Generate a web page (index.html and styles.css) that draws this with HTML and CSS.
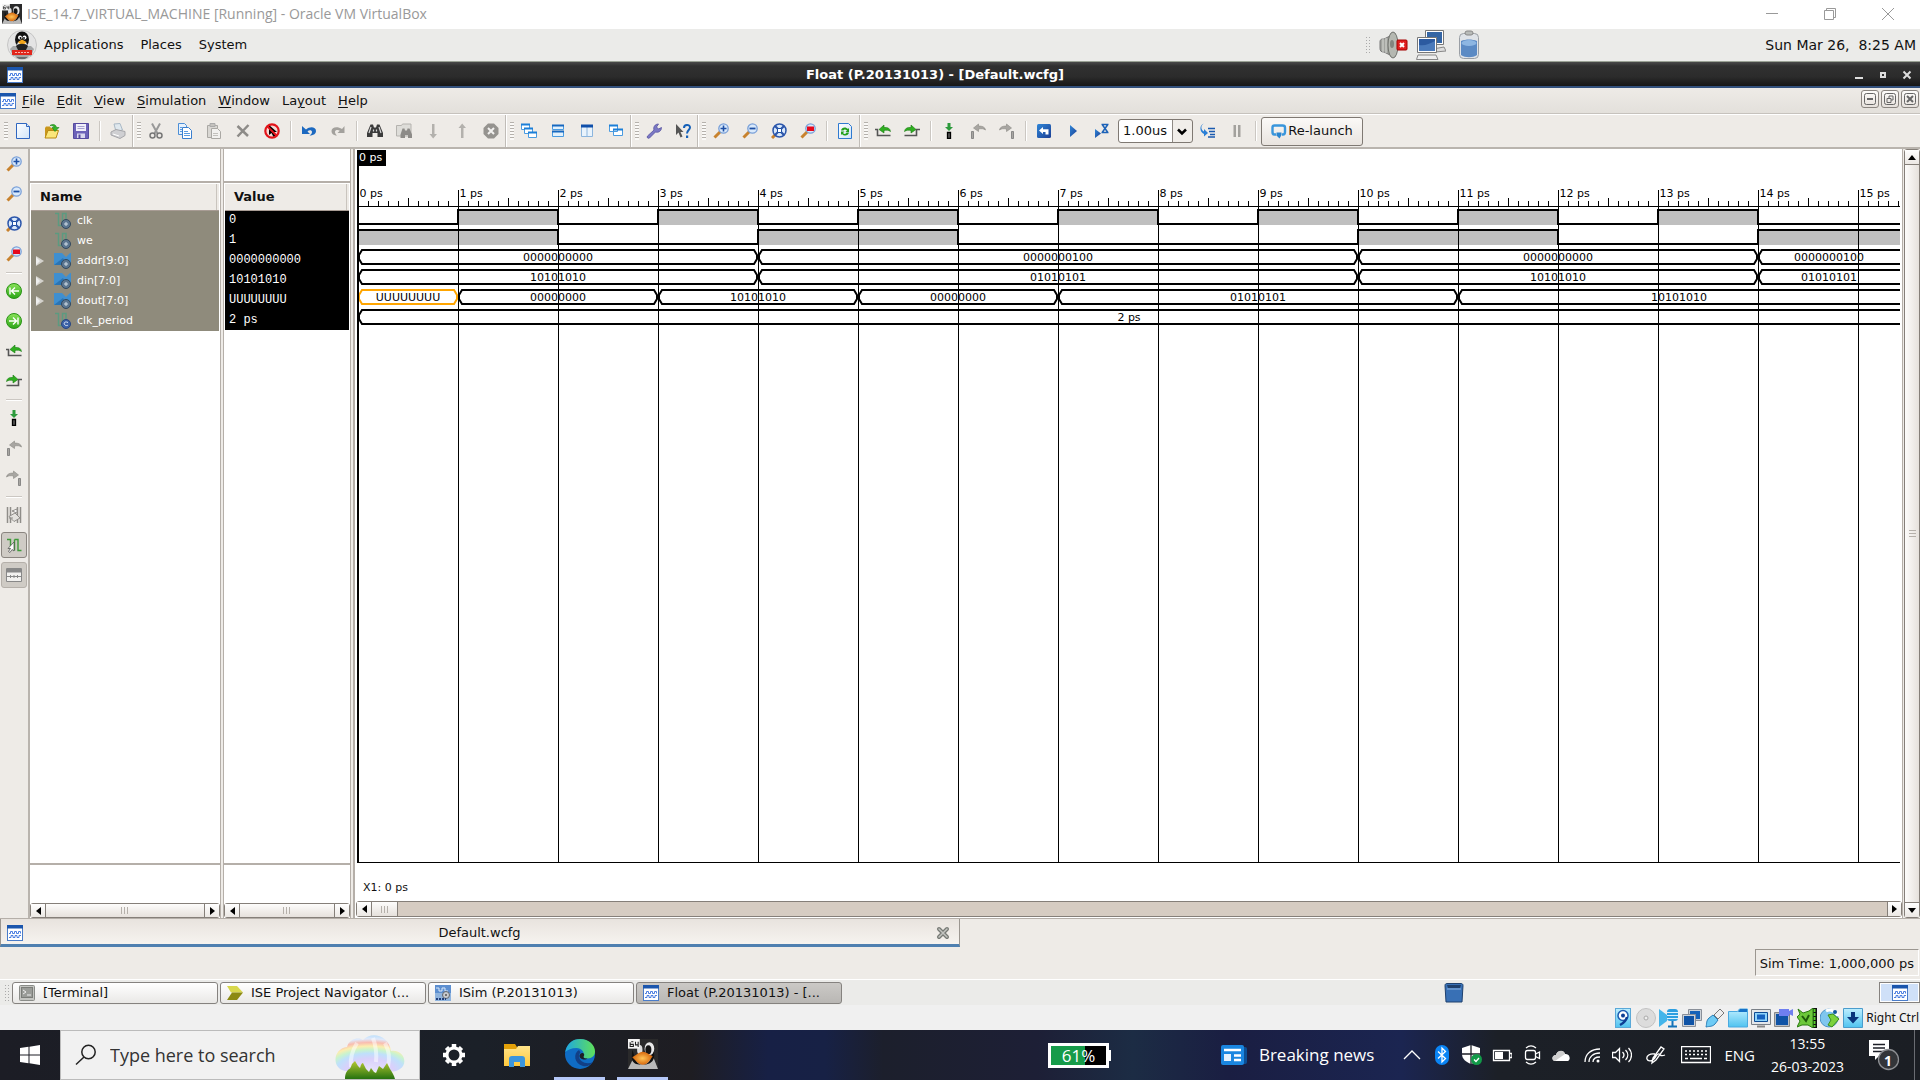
FILE: index.html
```html
<!DOCTYPE html>
<html lang="en">
<head>
<meta charset="utf-8">
<title>ISE_14.7_VIRTUAL_MACHINE [Running] - Oracle VM VirtualBox</title>
<link rel="stylesheet" href="styles.css">
</head>
<body>
<svg class="sprite" aria-hidden="true">
  <defs>
    <linearGradient id="gBlue" x1="0" y1="0" x2="1" y2="1"><stop offset="0" stop-color="#2f86d8"/><stop offset="1" stop-color="#1c3f94"/></linearGradient>
    <linearGradient id="gCyan" x1="0" y1="0" x2="0" y2="1"><stop offset="0" stop-color="#bdeeff"/><stop offset="1" stop-color="#4fc3f0"/></linearGradient>
    <linearGradient id="gPage" x1="0" y1="0" x2="1" y2="1"><stop offset="0" stop-color="#fff"/><stop offset="1" stop-color="#cfe4fa"/></linearGradient>
    <linearGradient id="gGreen" x1="0" y1="0" x2="0" y2="1"><stop offset="0" stop-color="#8be35a"/><stop offset="1" stop-color="#2aa516"/></linearGradient>
    <linearGradient id="gFolder" x1="0" y1="0" x2="0" y2="1"><stop offset="0" stop-color="#ffe48a"/><stop offset="1" stop-color="#ffc93c"/></linearGradient>
    <linearGradient id="gEdge" x1="0" y1="0" x2="1" y2="0"><stop offset="0" stop-color="#1fa7e0"/><stop offset="1" stop-color="#5fe05a"/></linearGradient>
    <radialGradient id="gRainbow" cx=".5" cy="1" r="1"><stop offset="0" stop-color="#e8e4fb"/><stop offset=".35" stop-color="#d9d0fb"/><stop offset=".5" stop-color="#bfe0fb"/><stop offset=".6" stop-color="#c8f3cf"/><stop offset=".7" stop-color="#fbeeb0"/><stop offset=".8" stop-color="#f9bdb0"/><stop offset=".9" stop-color="#dfe9fb"/><stop offset="1" stop-color="#bfe0fb"/></radialGradient>
    <linearGradient id="gGrass" x1="0" y1="0" x2="0" y2="1"><stop offset="0" stop-color="#b6c832"/><stop offset="1" stop-color="#25720f"/></linearGradient>
    <radialGradient id="gBeak"><stop offset="0" stop-color="#ffc457"/><stop offset="1" stop-color="#d5660c"/></radialGradient>
  </defs>
  <symbol id="wave" viewBox="0 0 16 16"><rect x=".5" y=".5" width="15" height="15" fill="#fff" stroke="#4a7cc8"/><rect width="16" height="3.500" fill="#1b56ad"/><path d="M2 8.500h1.500v-2h2v2h2v-2h2v2h2v-2h2v2M2 12.500h2v-2h2v2h2v-2h2v2h2v-2h2" fill="none" stroke="#4b7fe0"/></symbol>
  <symbol id="penguin" viewBox="0 0 28 28"><rect width="28" height="28" fill="#2a2a2b"/><path d="M0 28l4-8 20-2 4 10z" fill="#b9b9b9"/><path d="M4 10c3 8 3 14 10 14s9-10 9-14c3 5 2 14-9 14S3 20 4 10z" fill="#111"/><ellipse cx="11" cy="10" rx="2.500" ry="4.500" fill="#ddd"/><ellipse cx="20" cy="9" rx="4.500" ry="6" fill="#e8e8e8"/><ellipse cx="19" cy="10" rx="2.800" ry="4.200" fill="#151515"/><path d="M4 17c3-1 6-5 10-5 3 0 6 3 9 4-2 3-5 8-9 8s-7-4-10-7z" fill="url(#gBeak)"/><rect width="11" height="9" fill="#f4f4f4"/><path d="M2 3v4h3V5H2M5 2.500H3M7 2.500v3h3M9.500 2.500v5" fill="none" stroke="#222"/></symbol>
  <symbol id="new" viewBox="0 0 16 16"><path d="M1.500.5h10l3 3v12h-13z" fill="url(#gPage)" stroke="#2f66c0"/><path d="M11.500.5v3h3" fill="#dbe9fb" stroke="#2f66c0"/></symbol>
  <symbol id="open" viewBox="0 0 16 16"><path d="M1 5l1-1.500h4L7 5h5v10H1z" fill="#c9971c"/><path d="M1 15l3-7.500h10.500L12 15z" fill="#fbe67a" stroke="#b98a12"/><path d="M6 2.500c3-2 6-1 6.500 2H15l-4 4-3-4h2.200C10 3 8 2.500 6 2.500z" fill="#35b52a" stroke="#187d14" stroke-width=".6"/></symbol>
  <symbol id="save" viewBox="0 0 16 16"><path d="M.5.5h15v15h-15z" fill="#6c62b8" stroke="#554a9e"/><path d="M3 1h10v7H3z" fill="#f1f0fa"/><path d="M4.500 3.500h7M4.500 5.500h7" stroke="#a7a2d2"/><path d="M4 10.500h8V15H4z" fill="#d9d7ee"/><path d="M5.500 11.500h2V15h-2z" fill="#554a9e"/></symbol>
  <symbol id="print" viewBox="0 0 16 16"><path d="M4 1l6-.5L12.500 7 6 8.500z" fill="#dfe8ee" stroke="#a9b8c5"/><path d="M1 9l5-2.500 9 2v4L10 15.500 1 12z" fill="#cfcfd2" stroke="#a5a5a9"/><path d="M3 11l6 2" stroke="#fff"/></symbol>
  <symbol id="cut" viewBox="0 0 16 16"><path d="M4 .5l5.500 10M12 .5l-5.500 10" stroke="#999" stroke-width="2"/><circle cx="4.500" cy="12.500" r="2.500" fill="none" stroke="#777" stroke-width="1.500"/><circle cx="11.500" cy="12.500" r="2.500" fill="none" stroke="#777" stroke-width="1.500"/></symbol>
  <symbol id="copy" viewBox="0 0 16 16"><path d="M1.500.5h6l2 2v9h-8z" fill="#e6f1fd" stroke="#4d8fd6"/><path d="M5.500 4.500h6l3 3v8h-9z" fill="#fff" stroke="#3a7fce"/><path d="M7 8.500h4M7 10.500h6M7 12.500h6M3 4.500h2M3 6.500h2M3 8.500h2" stroke="#5a9be0"/></symbol>
  <symbol id="paste" viewBox="0 0 16 16"><path d="M1.500 2.500h10v12h-10z" fill="#d9d7d3" stroke="#aaa8a4"/><path d="M4 .5h5v3H4z" fill="#c4c2be" stroke="#aaa"/><path d="M5.500 5.500h6l3 3v7h-9z" fill="#f2f1ef" stroke="#aaa8a4"/><path d="M7 10.500h5M7 12.500h5" stroke="#c2c0bc"/></symbol>
  <symbol id="del" viewBox="0 0 16 16"><path d="M2.500 3l10.500 10M13.500 2L2.500 13.500" stroke="#8d8b88" stroke-width="2.500" fill="none"/></symbol>
  <symbol id="nocursor" viewBox="0 0 16 16"><circle cx="8" cy="8" r="6.500" fill="#f6d8d5"/><path d="M5 2v10l2.500-2 2 4 2-1-2-4h3.500z" fill="#000"/><circle cx="8" cy="8" r="6.700" fill="none" stroke="#e2141a" stroke-width="2.200"/><path d="M3.500 3.500l9 9" stroke="#e2141a" stroke-width="2"/></symbol>
  <symbol id="undo" viewBox="0 0 16 16"><path d="M1 3v8h8L6.500 8.500C8 6.800 11 7 11 9c0 1.500-1 2.500-2.500 3.500C12 12.500 15 11 15 8c0-4-6-5-10-1.500z" fill="#1c69c0"/></symbol>
  <symbol id="redo" viewBox="0 0 16 16"><path d="M14.500 3v7h-7l2.300-2.200C8 6.500 5 7 5 9c0 1.300.8 2.300 2 3.500C4 12.500 1.500 11 1.500 8c0-4 6-5 10.500-2z" fill="#a3a19d"/></symbol>
  <symbol id="bino" viewBox="0 0 16 16"><path d="M3.500 1.500h2.500l1 3h2l1-3h2.500L16 10v4h-5.500v-4h-5v4H0v-4z" fill="#3b3b3b"/><path d="M4 4L2 10M12 4l2 6M6.500 6.500v2M9.500 6.500v2" stroke="#d8d8d8" stroke-width="1.200"/></symbol>
  <symbol id="findfile" viewBox="0 0 16 16"><path d="M.5 13V2.500h5l1-1.500H15V13z" fill="#deddd9" stroke="#b5b3af"/><path d="M6.500 5.500h2l.5 2h2l.5-2h2l2.500 6V15h-4v-3H9v3H4.500v-3.500z" fill="#8d8b88"/></symbol>
  <symbol id="down" viewBox="0 0 16 16"><path d="M7 1h2.500v10H12l-3.800 4.500L4.500 11H7z" fill="#b3b1ad"/></symbol>
  <symbol id="up" viewBox="0 0 16 16"><path d="M7 15h2.500V5H12L8.200.5 4.500 5H7z" fill="#b3b1ad"/></symbol>
  <symbol id="stop" viewBox="0 0 16 16"><path d="M5 .5h6L15.500 5v6L11 15.500H5L.5 11V5z" fill="#95938f"/><path d="M5 5l6 6M11 5l-6 6" stroke="#f2f1ef" stroke-width="2"/></symbol>
  <symbol id="cascade" viewBox="0 0 16 16"><g fill="#fff" stroke="#4a9be0"><path d="M.5 1.500h8v5h-8z"/><path d="M3.500 5.500h8v5h-8z"/><path d="M7.500 9.500h8v5h-8z"/></g><path d="M0 1.500h9M3 5.500h9M7 9.500h9" stroke="#1b7fd8" stroke-width="2"/></symbol>
  <symbol id="tileh" viewBox="0 0 16 16"><path d="M2.500 2.500h11v4h-11zM2.500 8.500h11v5h-11z" fill="#e3f1fc" stroke="#4a9be0"/><path d="M2 2.500h12M2 8.500h12" stroke="#1668c0" stroke-width="2"/></symbol>
  <symbol id="tilev" viewBox="0 0 16 16"><path d="M2.500 2.500h11v11h-11zM8 4v10" fill="#e9f3fc" stroke="#8cb5dd"/><path d="M2 3h12" stroke="#0f4faa" stroke-width="3"/></symbol>
  <symbol id="windows" viewBox="0 0 16 16"><path d="M1.500 2.500h8v6h-8zM5.500 6.500h9v6h-9z" fill="#fff" stroke="#4a9be0"/><path d="M1 2.500h9M5 6.500h10" stroke="#1b7fd8" stroke-width="2"/></symbol>
  <symbol id="wrench" viewBox="0 0 16 16"><path d="M1.500 13L8 7c-1-3 1-6 4.500-6L10.500 4l2 2 3-1.500c0 3.500-3 5.500-6 4.500l-6 6c-1.500 1-3-.5-2-2z" fill="#7b78c4" stroke="#5552a0" stroke-width=".8"/></symbol>
  <symbol id="whats" viewBox="0 0 16 16"><path d="M1 1v11l2.500-2.500 2 5 2-1-2-4.500h3z" fill="#555"/><path d="M9 5c0-4 6-4 6-.5 0 2.500-3 2.500-3 6" fill="none" stroke="#1560b8" stroke-width="2"/><path d="M11 12.500h2.200V15H11z" fill="#1560b8"/></symbol>
  <symbol id="lens" viewBox="0 0 16 16"><path d="M7.500 8.500l-6 6" stroke="#c8822e" stroke-width="3"/><circle cx="10.500" cy="5.500" r="4.700" fill="#d9e9fb" stroke="#7aa0d8" stroke-width="1.300"/></symbol>
  <symbol id="zin" viewBox="0 0 16 16"><use href="#lens"/><path d="M7.500 5.500h6M10.500 2.500v6" stroke="#1d4fa5" stroke-width="1.600"/></symbol>
  <symbol id="zout" viewBox="0 0 16 16"><use href="#lens"/><path d="M7.500 5.500h6" stroke="#1d4fa5" stroke-width="1.800"/></symbol>
  <symbol id="zfull" viewBox="0 0 16 16"><path d="M4 12l-3 3" stroke="#c8822e" stroke-width="3"/><circle cx="8.500" cy="7.500" r="6.500" fill="#d9e9fb" stroke="#2c56ab" stroke-width="1.500"/><path d="M4 3l9 9M13 3l-9 9" stroke="#2c56ab" stroke-width="2.200"/><path d="M6.500 5.500h4v4h-4z" fill="#fff" stroke="#1d4fa5"/></symbol>
  <symbol id="zsel" viewBox="0 0 16 16"><use href="#lens"/><path d="M7 3.500h7v4.500H7z" fill="#e5091c"/></symbol>
  <symbol id="refresh" viewBox="0 0 16 16"><path d="M1.500.5h10l3 3v12h-13z" fill="url(#gPage)" stroke="#2f7ad0"/><path d="M4 7.500c.5-3.500 5-4 7-1.500l1-1v4H8.500L10 7.500c-1.500-1.500-3-1.500-3.500 0zM12 9.500c-.5 3.500-5 4-7 1.500l-1 1V8.500h3.500L6 10c1.500 1.500 3 1 3.500-.5z" fill="#22a01c"/></symbol>
  <symbol id="prevedge" viewBox="0 0 16 16"><path d="M0 6.500h2.500v6H15.500" fill="none" stroke="#555" stroke-width="1.600"/><path d="M4 6.500L9 2v2.500c4-.5 6 1 6.500 4-2-1.500-4-1.500-6.500-1V10z" fill="#2fae20" stroke="#177a10" stroke-width=".6"/></symbol>
  <symbol id="nextedge" viewBox="0 0 16 16"><path d="M.5 12.500h12v-6H16" fill="none" stroke="#555" stroke-width="1.600"/><path d="M12 6.500L7 2v2.500C3 4 1 5.500.5 8.500 2.500 7 4.500 7 7 7.500V10z" fill="#2fae20" stroke="#177a10" stroke-width=".6"/></symbol>
  <symbol id="marker" viewBox="0 0 16 16"><path d="M6.500 0h3v4H12L8 8 4 4h2.500z" fill="#2c9a3c"/><path d="M6.500 9.500h3v6h-3z" fill="#555" stroke="#000" stroke-width="1.300"/></symbol>
  <symbol id="prevmark" viewBox="0 0 16 16"><path d="M1.500 8.500h2v7h-2z" fill="#a8a6a2" stroke="#777" stroke-width=".8"/><path d="M3.500 5L8.500 1v2c4 0 6.500 1 7 4-2-1.500-4-1.500-7-1v2.500z" fill="#a8a6a2" stroke="#8b8985" stroke-width=".6"/></symbol>
  <symbol id="nextmark" viewBox="0 0 16 16"><path d="M12.500 8.500h2v7h-2z" fill="#a8a6a2" stroke="#777" stroke-width=".8"/><path d="M12.500 5L7.500 1v2c-4 0-6.500 1-7 4 2-1.500 4-1.500 7-1v2.500z" fill="#a8a6a2" stroke="#8b8985" stroke-width=".6"/></symbol>
  <symbol id="restart" viewBox="0 0 16 16"><rect x="1" y="1" width="14" height="14" rx="1.500" fill="url(#gBlue)"/><path d="M3 7.500L7 4v2.300h5.500v5.200h-3V9H7v2z" fill="#fff"/></symbol>
  <symbol id="run" viewBox="0 0 16 16"><path d="M5 2l7 6-7 6z" fill="url(#gBlue)"/></symbol>
  <symbol id="runfor" viewBox="0 0 16 16"><path d="M1 6l6 4.500L1 15z" fill="url(#gBlue)"/><path d="M7.500 1.500h7M7.500 9.500h7M8.500 2l5 7M13.500 2l-5 7" stroke="#1c62b8" stroke-width="1.500"/></symbol>
  <symbol id="step" viewBox="0 0 16 16"><path d="M4 .5C.5 2 .5 7 4 8.500V6l4 4-4 3.500V11C-.5 9-1 2 4 .5z" fill="#2a7fd6"/><path d="M8 5.500h7M9 8.500h6M10 11.500h5M8 14h7" stroke="#1a5ab0" stroke-width="1.400"/></symbol>
  <symbol id="pause" viewBox="0 0 16 16"><path d="M4.500 2H7v12H4.500zM9 2h2.500v12H9z" fill="#a3a19d"/></symbol>
  <symbol id="relaunch" viewBox="0 0 16 16"><path d="M5 11.500H3.500C1.500 11.500 1.500 10 1.500 9V4.500C1.500 3 2 2.500 3.500 2.500h8c1.500 0 2.500.5 2.500 2v4.500c0 1.500-.5 2.500-2 2.500h-1" fill="none" stroke="#3a96dc" stroke-width="2.400"/><path d="M5.500 9.500h5v2.500l-2 3.500-3-3z" fill="#2b86d0"/></symbol>
  <symbol id="goleft" viewBox="0 0 16 16"><circle cx="8" cy="8" r="7.500" fill="url(#gGreen)" stroke="#2b9417"/><path d="M4 4.500v7M13 8H6M9 4.500L5.500 8 9 11.500" fill="none" stroke="#fff" stroke-width="1.400"/></symbol>
  <symbol id="goright" viewBox="0 0 16 16"><circle cx="8" cy="8" r="7.500" fill="url(#gGreen)" stroke="#2b9417"/><path d="M12 4.500v7M3 8h7M7 4.500L10.500 8 7 11.500" fill="none" stroke="#fff" stroke-width="1.400"/></symbol>
  <symbol id="snap" viewBox="0 0 16 16"><path d="M1.500 0v16M4.500 0v16M11.500 0v16M14.500 0v16" stroke="#8f8d89" stroke-width="1.500"/><path d="M3 11h4M3 9.500L9 6l5 5-6 3.500z" fill="#e4e2de" stroke="#8f8d89"/><path d="M6 4l5-2v4z" fill="#fff" stroke="#8f8d89"/></symbol>
  <symbol id="pick" viewBox="0 0 16 16"><path d="M1 2.500h3.500v11M8.500 13.500v-11M8.500 2.500H12v11h3.500" fill="none" stroke="#3f9a3a" stroke-width="1.400"/><path d="M8 5v9l-2-1.500-2 3-1.500-1 2-3H2z" fill="#fff" stroke="#555" stroke-width=".8"/></symbol>
  <symbol id="ruler" viewBox="0 0 16 16"><path d="M.5 1.500h15v13H.5z" fill="#f2f1ef" stroke="#888"/><path d="M1 2h14v3H1zM1 9.500h14M4.500 8v3M8 8v3M11.500 8v3" fill="#888" stroke="#888"/></symbol>
  <symbol id="sigbit" viewBox="0 0 17 17"><path d="M1 1.500h3.500v12h4v-12H12v6" fill="none" stroke="#5c9a80" stroke-width="1.500"/><circle cx="12" cy="12" r="4.500" fill="#5c7690" stroke="#33495e"/><path d="M10 12h4M12 10v4" stroke="#cfdbe6"/></symbol>
  <symbol id="sigconst" viewBox="0 0 17 17"><path d="M1 1.500h3.500v12h4v-12H12v6" fill="none" stroke="#5c9a80" stroke-width="1.500"/><circle cx="12" cy="12" r="4.500" fill="#3c62a8" stroke="#2a4680"/><path d="M14 10.500c-3-1.500-4.500.5-3.500 2s3 1.200 3.500.5" fill="none" stroke="#dbe6f6"/></symbol>
  <symbol id="sigbus" viewBox="0 0 17 17"><path d="M0 1h8l4 4 4-4h1v12H0z" fill="#3f8fd0"/><path d="M0 13l9-7 4 7z" fill="#2a74b4"/><circle cx="12" cy="12" r="4.500" fill="#5c7690" stroke="#33495e"/><path d="M10 12h4M12 10v4" stroke="#cfdbe6"/></symbol>
  <symbol id="expand" viewBox="0 0 8 10"><path d="M0 0l8 5-8 5z" fill="#d4d2cc"/><path d="M0 1l4 4-4 4z" fill="#eee"/></symbol>
</svg>

<header class="host-title">
  <svg class="i20"><use href="#penguin"/></svg>
  <span class="host-name">ISE_14.7_VIRTUAL_MACHINE [Running] - Oracle VM VirtualBox</span>
  <button class="host-btn" aria-label="Minimize"><svg viewBox="0 0 14 14"><path d="M1 6.500h12"/></svg></button>
  <button class="host-btn" aria-label="Restore"><svg viewBox="0 0 14 14"><path d="M1.500 3.500h9v9h-9zM3.500 3.500v-2h9v9h-2"/></svg></button>
  <button class="host-btn" aria-label="Close"><svg viewBox="0 0 14 14"><path d="M1 1l12 12M13 1L1 13"/></svg></button>
</header>

<nav class="gnome-top">
  <svg class="i30" viewBox="0 0 30 30"><circle cx="15" cy="15" r="14.500" fill="#e4e4e4" stroke="#c5c5c5"/><ellipse cx="15" cy="9.500" rx="7" ry="8" fill="#111"/><ellipse cx="15" cy="15" rx="5" ry="4" fill="#eee"/><circle cx="13" cy="7.500" r="2" fill="#fff"/><circle cx="17.500" cy="7.500" r="2" fill="#fff"/><circle cx="13.500" cy="8" r=".9"/><circle cx="17" cy="8" r=".9"/><path d="M11 12l4-2.500 4.500 2.500-4.500 4z" fill="#f4a71c"/><path d="M3 19l3-3 18 0 3 3-3 7H6z" fill="#a5a7a8"/><path d="M9 16c2-3 10-3 12 0l-2 4h-8z" fill="#222"/><rect x="5" y="20" width="20" height="5" fill="#e1261c"/><path d="M8 22.500h14" stroke="#f6b9b4" stroke-dasharray="2 1"/><path d="M8 26.500h14l-4 2.500h-6z" fill="#6a6c6d"/></svg>
  <button class="plain">Applications</button>
  <button class="plain">Places</button>
  <button class="plain">System</button>
  <span class="tray-grip"></span>
  <svg class="i30" viewBox="0 0 30 30"><path d="M2 12c0-3 2-3 4-3l6-3v19l-6-3c-3 0-4-1-4-4z" fill="#a2a49f" stroke="#777"/><path d="M5 9v13M8 8v15" stroke="#d8dad5"/><ellipse cx="15" cy="15" rx="5" ry="13" fill="#b5b8b1" stroke="#6f716c"/><ellipse cx="14" cy="14" rx="2" ry="4" fill="#83857f"/><rect x="19" y="10" width="10" height="10" rx="1" fill="#e01e1e" stroke="#a40000"/><path d="M22 13l4 4M26 13l-4 4" stroke="#fff" stroke-width="2"/></svg>
  <svg class="i30 tray-net" viewBox="0 0 30 30"><path d="M9.500.5h18v14h-18z" fill="#fff" stroke="#777"/><path d="M11 2h15v11H11z" fill="#3465a4"/><path d="M17 19l11-2 2 4-11 1z" fill="#ddd" stroke="#888"/><path d="M1.500 7.500h19v15h-19z" fill="#fff" stroke="#777"/><path d="M3 9h16v12H3z" fill="#2c5aa0"/><path d="M3 15c6 1 10-1 16-4v10H3z" fill="#4a7abb"/><path d="M2 25h18l2 4.500H.5z" fill="#eee" stroke="#888"/></svg>
  <svg class="i30" viewBox="0 0 30 30"><rect x="5.500" y="3.500" width="19" height="25" rx="4" fill="#dfe3e8" stroke="#9a9fa5"/><path d="M7 11c5-2 11-2 16 0v14c-4 3-12 3-16 0z" fill="#5b8ac4"/><ellipse cx="15" cy="13" rx="7.500" ry="3" fill="#8db6e2"/><rect x="11" y="1" width="8" height="4" rx="2" fill="#b8bbb9" stroke="#888"/></svg>
  <time class="gnome-clock">Sun Mar 26,&nbsp; 8:25 AM</time>
</nav>

<div class="win-title">
  <svg class="i16"><use href="#wave"/></svg>
  <h1>Float (P.20131013) - [Default.wcfg]</h1>
  <button aria-label="Minimize"><svg viewBox="0 0 10 10"><path d="M1 8h8" stroke-width="2"/></svg></button>
  <button aria-label="Maximize"><svg viewBox="0 0 10 10"><path d="M3 3h4v4H3z" stroke-width="2"/></svg></button>
  <button aria-label="Close"><svg viewBox="0 0 10 10"><path d="M1.500 1.500l7 7M8.500 1.500l-7 7" stroke-width="2"/></svg></button>
</div>

<nav class="menubar">
  <svg class="i16"><use href="#wave"/></svg>
  <button class="plain"><u>F</u>ile</button>
  <button class="plain"><u>E</u>dit</button>
  <button class="plain"><u>V</u>iew</button>
  <button class="plain"><u>S</u>imulation</button>
  <button class="plain"><u>W</u>indow</button>
  <button class="plain">La<u>y</u>out</button>
  <button class="plain"><u>H</u>elp</button>
  <span class="mdi">
    <button aria-label="Minimize document"><svg viewBox="0 0 16 16"><rect x="2.500" y="2.500" width="11" height="11" rx="2"/><path d="M5 8h6" stroke-width="2"/></svg></button>
    <button aria-label="Restore document"><svg viewBox="0 0 16 16"><rect x="2.500" y="2.500" width="11" height="11" rx="2"/><path d="M5 7.500h4v4H5zM7 7V5h4v4H9"/></svg></button>
    <button aria-label="Close document"><svg viewBox="0 0 16 16"><rect x="2.500" y="2.500" width="11" height="11" rx="2"/><path d="M5 5l6 6M11 5l-6 6" stroke-width="2"/></svg></button>
  </span>
</nav>

<div class="toolbar" role="toolbar">
  <div class="group"><button aria-label="New"><svg><use href="#new"/></svg></button><button aria-label="Open"><svg><use href="#open"/></svg></button><button aria-label="Save"><svg><use href="#save"/></svg></button><i class="sep"></i><button aria-label="Print"><svg><use href="#print"/></svg></button></div>
  <div class="group"><button aria-label="Cut"><svg><use href="#cut"/></svg></button><button aria-label="Copy"><svg><use href="#copy"/></svg></button><button aria-label="Paste"><svg><use href="#paste"/></svg></button><button aria-label="Delete"><svg><use href="#del"/></svg></button><button aria-label="Deselect"><svg><use href="#nocursor"/></svg></button><i class="sep"></i><button aria-label="Undo"><svg><use href="#undo"/></svg></button><button aria-label="Redo"><svg><use href="#redo"/></svg></button><i class="sep"></i><button aria-label="Find"><svg><use href="#bino"/></svg></button><button aria-label="Find in files"><svg><use href="#findfile"/></svg></button><button aria-label="Find next"><svg><use href="#down"/></svg></button><button aria-label="Find previous"><svg><use href="#up"/></svg></button><button aria-label="Stop"><svg><use href="#stop"/></svg></button></div>
  <div class="group"><button aria-label="Cascade"><svg><use href="#cascade"/></svg></button><button aria-label="Tile horizontally"><svg><use href="#tileh"/></svg></button><button aria-label="Tile vertically"><svg><use href="#tilev"/></svg></button><button aria-label="Float"><svg><use href="#windows"/></svg></button></div>
  <div class="group"><button aria-label="Settings"><svg><use href="#wrench"/></svg></button><button aria-label="What's this"><svg><use href="#whats"/></svg></button></div>
  <div class="group"><button aria-label="Zoom in"><svg><use href="#zin"/></svg></button><button aria-label="Zoom out"><svg><use href="#zout"/></svg></button><button aria-label="Zoom full"><svg><use href="#zfull"/></svg></button><button aria-label="Zoom selection"><svg><use href="#zsel"/></svg></button><i class="sep"></i><button aria-label="Refresh"><svg><use href="#refresh"/></svg></button></div>
  <div class="group last"><button aria-label="Previous transition"><svg><use href="#prevedge"/></svg></button><button aria-label="Next transition"><svg><use href="#nextedge"/></svg></button><i class="sep"></i><button aria-label="Add marker"><svg><use href="#marker"/></svg></button><button aria-label="Previous marker"><svg><use href="#prevmark"/></svg></button><button aria-label="Next marker"><svg><use href="#nextmark"/></svg></button><i class="sep"></i><button aria-label="Restart"><svg><use href="#restart"/></svg></button><button aria-label="Run all"><svg><use href="#run"/></svg></button><button aria-label="Run for time"><svg><use href="#runfor"/></svg></button>
    <span class="combo"><select aria-label="Run time"><option>1.00us</option></select><svg viewBox="0 0 10 8"><path d="M1 1.500l4 4 4-4" fill="none" stroke="#000" stroke-width="2.500"/></svg></span>
    <button aria-label="Step"><svg><use href="#step"/></svg></button><button aria-label="Break"><svg><use href="#pause"/></svg></button><i class="sep"></i><button class="relaunch"><svg><use href="#relaunch"/></svg>Re-launch</button></div>
</div>

<main class="workspace">
  <div class="sidebar" role="toolbar">
    <button aria-label="Zoom in"><svg><use href="#zin"/></svg></button>
    <button aria-label="Zoom out"><svg><use href="#zout"/></svg></button>
    <button aria-label="Zoom full"><svg><use href="#zfull"/></svg></button>
    <button aria-label="Zoom selection"><svg><use href="#zsel"/></svg></button>
    <i class="hsep"></i>
    <button aria-label="Go to start"><svg><use href="#goleft"/></svg></button>
    <button aria-label="Go to end"><svg><use href="#goright"/></svg></button>
    <button aria-label="Previous transition"><svg><use href="#prevedge"/></svg></button>
    <button aria-label="Next transition"><svg><use href="#nextedge"/></svg></button>
    <i class="hsep"></i>
    <button aria-label="Add marker"><svg><use href="#marker"/></svg></button>
    <button aria-label="Previous marker"><svg><use href="#prevmark"/></svg></button>
    <button aria-label="Next marker"><svg><use href="#nextmark"/></svg></button>
    <i class="hsep"></i>
    <button aria-label="Swap cursors"><svg><use href="#snap"/></svg></button>
    <button class="pressed" aria-label="Snap to transition"><svg><use href="#pick"/></svg></button>
    <button class="pressed dim" aria-label="Floating ruler"><svg><use href="#ruler"/></svg></button>
  </div>

  <section class="pane names">
    <div class="pane-top"></div>
    <div class="pane-body">
      <table>
        <thead><tr><th>Name</th></tr></thead>
        <tbody>
          <tr><td><span class="sig"><i></i><svg><use href="#sigbit"/></svg>clk</span></td></tr>
          <tr><td><span class="sig"><i></i><svg><use href="#sigbit"/></svg>we</span></td></tr>
          <tr><td><span class="sig"><i><svg><use href="#expand"/></svg></i><svg><use href="#sigbus"/></svg>addr[9:0]</span></td></tr>
          <tr><td><span class="sig"><i><svg><use href="#expand"/></svg></i><svg><use href="#sigbus"/></svg>din[7:0]</span></td></tr>
          <tr><td><span class="sig"><i><svg><use href="#expand"/></svg></i><svg><use href="#sigbus"/></svg>dout[7:0]</span></td></tr>
          <tr><td><span class="sig"><i></i><svg><use href="#sigconst"/></svg>clk_period</span></td></tr>
        </tbody>
      </table>
    </div>
    <div class="pane-foot"></div>
    <div class="hscroll"><button class="left" aria-label="Scroll left"></button><span class="thumb full"></span><button class="right" aria-label="Scroll right"></button></div>
  </section>

  <section class="pane values">
    <div class="pane-top"></div>
    <div class="pane-body">
      <table>
        <thead><tr><th>Value</th></tr></thead>
        <tbody>
          <tr><td>0</td></tr>
          <tr><td>1</td></tr>
          <tr><td>0000000000</td></tr>
          <tr><td>10101010</td></tr>
          <tr><td>UUUUUUUU</td></tr>
          <tr><td>2 ps</td></tr>
        </tbody>
      </table>
    </div>
    <div class="pane-foot"></div>
    <div class="hscroll"><button class="left" aria-label="Scroll left"></button><span class="thumb full"></span><button class="right" aria-label="Scroll right"></button></div>
  </section>

  <section class="pane waves">
    <div class="wave-view"><svg id="waveform"></svg></div>
    <p class="cursor-info">X1: 0 ps</p>
    <div class="hscroll"><button class="left" aria-label="Scroll left"></button><span class="thumb"></span><span class="trough"></span><button class="right" aria-label="Scroll right"></button></div>
  </section>

  <div class="vscroll"><button class="top" aria-label="Scroll up"></button><span class="thumb"></span><button class="bottom" aria-label="Scroll down"></button></div>
</main>

<div class="doc-tabs">
  <div class="doc-tab"><svg class="i16"><use href="#wave"/></svg><span>Default.wcfg</span><button aria-label="Close tab"><svg viewBox="0 0 14 14"><path d="M3 3l8 8M11 3l-8 8" stroke="#777a75" stroke-width="4" stroke-linecap="round"/><path d="M3 3l8 8M11 3l-8 8" stroke="#c3c4c0" stroke-width="1.500" stroke-linecap="round"/></svg></button></div>
</div>
<div class="status"><span>Sim Time: 1,000,000 ps</span></div>

<nav class="gnome-bottom">
  <span class="tray-grip"></span>
  <button class="task"><svg viewBox="0 0 16 16"><rect x=".5" y=".5" width="15" height="15" rx="1" fill="#c4c5c1" stroke="#8a8c88"/><rect x="2.500" y="2.500" width="11" height="10" fill="#9a9c98" stroke="#7b7d79"/><path d="M4 5l3 2-3 2M8 10h4" fill="none" stroke="#eee"/></svg>[Terminal]</button>
  <button class="task"><svg viewBox="0 0 16 16"><path d="M0 1h10l6 6.500H4z" fill="#d8d84c"/><path d="M16 7.500L10 15H0l5-7.500z" fill="#8c8a12"/></svg>ISE Project Navigator (...</button>
  <button class="task"><svg viewBox="0 0 16 16"><rect width="16" height="16" fill="#8fb4de"/><path d="M0 0h16v8H0z" fill="#5d8fd0"/><path d="M1 3h3v3h3V3h3v3h3" fill="none" stroke="#dbe9f8"/><circle cx="11" cy="10" r="3.500" fill="#c9ccd0" stroke="#60666e"/><circle cx="11" cy="10" r="1" fill="#555"/><path d="M1 14h10" stroke="#223f7a" stroke-width="2" stroke-dasharray="2 1"/></svg>ISim (P.20131013)</button>
  <button class="task active"><svg><use href="#wave"/></svg>Float (P.20131013) - [...</button>
  <svg class="trash" viewBox="0 0 20 20"><path d="M1 2.500C1 1 2 .5 3 .5h14c1 0 2 .5 2 2L18 19H2z" fill="#3870b5" stroke="#1f416e"/><path d="M3 2h14l-1 3H4z" fill="#1d3f6c"/><path d="M3 6h14" stroke="#8ab3e3"/></svg>
  <button class="pager" aria-label="Workspace 1"><svg class="i16"><use href="#wave"/></svg></button>
</nav>

<footer class="vbox-status">
  <svg viewBox="0 0 20 20"><rect x="2.500" y=".5" width="15" height="19" fill="url(#gCyan)" stroke="#5aa9d8"/><circle cx="10" cy="7.500" r="5" fill="#fff" stroke="#1d5cb0" stroke-width="1.500"/><circle cx="10" cy="7.500" r="2" fill="#0d3f94"/><path d="M14 9c-1 4-3 6-7 8" fill="none" stroke="#0d3f94" stroke-width="2.500"/></svg>
  <svg viewBox="0 0 20 20"><circle cx="10" cy="10" r="9.500" fill="#dcdcdc" stroke="#c2c2c2"/><circle cx="10" cy="10" r="2" fill="#eee" stroke="#aaa"/></svg>
  <svg viewBox="0 0 20 20"><path d="M0 1l8 6v6l-8 6z" fill="#44b5ea"/><rect x="8" y="1" width="11" height="12" rx="3" fill="#2d9fe0"/><path d="M8 4.500h11M8 7.500h11M8 10.500h11" stroke="#d8f1fd"/><path d="M13.500 13v5M9 18.500h9" stroke="#1272b8" stroke-width="2"/></svg>
  <svg viewBox="0 0 20 20"><path d="M6.500 1.500h13v11h-13z" fill="#cdd3da" stroke="#8a9099"/><path d="M8 3h10v8H8z" fill="#1662b8"/><path d="M.5 6.500h13v12H.5z" fill="#cdd3da" stroke="#8a9099"/><path d="M2 8h10v9H2z" fill="#0f53a6"/></svg>
  <svg viewBox="0 0 20 20"><path d="M1 19c1-4 0-6 3-9l4-3 5 5-3 4c-3 3-5 2-9 3z" fill="#6ecbf5" stroke="#2a7fb8"/><path d="M9 7l6-6 4 4-6 6z" fill="#eee" stroke="#777"/></svg>
  <svg viewBox="0 0 20 20"><path d="M.5 3.500h9l2-2.500h8v18h-19z" fill="url(#gCyan)" stroke="#4aa9e0"/><path d="M10 4l2-3h7v3z" fill="#1672c8"/></svg>
  <svg viewBox="0 0 20 20"><path d="M.5 1.500h19v15H.5z" fill="#e4e7ea" stroke="#7a8087"/><path d="M3.500 4.500h13v9h-13z" fill="#8fd4fa" stroke="#0f4b94"/><path d="M6 6.500h8v5H6z" fill="#1662c0"/><path d="M6 18.500h8" stroke="#888" stroke-width="2"/></svg>
  <svg viewBox="0 0 20 20"><path d="M.5 4.500h15v14H.5z" fill="#b8bec6" stroke="#888"/><path d="M2 6h12v11H2z" fill="#0f53a6"/><path d="M5 1h10v7H5zM15 3l4-2v7l-4-2z" fill="#6f7ff0"/></svg>
  <svg viewBox="0 0 20 20"><rect x="15" y="0" width="5" height="20" fill="#111"/><path d="M17.500 1v18" stroke="#57d02c" stroke-width="2" stroke-dasharray="3 1"/><path d="M1 1l5 4 6-2 4-3v20l-5-3H5l-5 2 3-6-3-4 3-3z" fill="#6cc83a" stroke="#2a7a12"/><path d="M5 8l4 5 3-6" fill="none" stroke="#1c5a0a" stroke-width="2"/></svg>
  <svg viewBox="0 0 20 20"><circle cx="9" cy="10" r="9" fill="#7fc6ef" stroke="#4a92c8"/><path d="M6 3c5-3 10 1 12 5" stroke="#fff" stroke-width="3" fill="none"/><path d="M8 7l5-1 6 5-7 8-4-2 3-5z" fill="#7bd23c" stroke="#3d8f1a"/><circle cx="15" cy="4" r="2" fill="#12589c"/></svg>
  <svg viewBox="0 0 20 20"><path d="M.5.500h19v19H.5z" fill="url(#gCyan)" stroke="#4a9ccc"/><path d="M8 4h4v5h4l-6 6.500L4 9h4z" fill="#08347c"/></svg>
  <span>Right Ctrl</span>
</footer>

<div class="taskbar">
  <button class="start" aria-label="Start"><svg viewBox="0 0 20 20"><path d="M0 3l8.500-1.200v7.700H0zM9.500 1.700L20 0v9.500H9.500zM0 10.500h8.500v7.700L0 17zM9.500 10.500H20V20L9.500 18.300z" fill="#fff"/></svg></button>
  <label class="search">
    <svg class="glass" viewBox="0 0 22 22"><circle cx="13.500" cy="8" r="6.700" fill="none" stroke="#222" stroke-width="1.500"/><path d="M9 13l-8 7.500" stroke="#222" stroke-width="1.500"/></svg>
    <input type="text" placeholder="Type here to search" aria-label="Search">
    <svg class="doodle" viewBox="0 0 70 44"><path d="M10 36C-3 34-3 14 12 12 14 3 25 2 28 5 36-4 54 0 56 16c12-2 18 12 9 18-3 2-6 3-10 2z" fill="url(#gRainbow)"/><path d="M22 8c-5 8-7 16-6 24M50 8c4 8 5 14 3 24M38 3c3 8 4 14 3 24" stroke="#fff" stroke-opacity=".5" stroke-width="4" fill="none"/><path d="M10 44c0-6 2-8 4-10 1 0 2-2 3-5l3-3 3 5 2 2c1-4 2-5 3-5l3 6 3 3 2-4 3 4 2 1 3-7 4 3 4-6 3 6c2 3 4 6 5 10z" fill="url(#gGrass)"/></svg>
  </label>
  <button class="app" aria-label="Settings"><svg viewBox="0 0 24 24"><path d="M12 4v-3M12 23v-3M4 12H1M23 12h-3M6.300 6.300L4.500 4.500M19.500 19.500l-1.800-1.800M6.300 17.700l-1.800 1.800M19.500 4.500l-1.800 1.800" stroke="#fff" stroke-width="4.500"/><circle cx="12" cy="12" r="7" fill="none" stroke="#fff" stroke-width="3"/></svg></button>
  <button class="app" aria-label="File Explorer"><svg class="i28" viewBox="0 0 28 28"><path d="M1 3h11l2 3v4H1z" fill="#e3a008"/><path d="M1 8h12l2-3h12v20H1z" fill="url(#gFolder)"/><path d="M6 26V18c0-2 1-3 3-3h10c2 0 3 1 3 3v8h-5v-5h-6v5z" fill="#3b95dc"/></svg></button>
  <button class="app open" aria-label="Microsoft Edge"><svg class="i30" viewBox="0 0 30 30"><circle cx="15" cy="15" r="15" fill="#0f6cc4"/><path d="M.3 13C2 4 8 0 15 0c9 0 15 6 15 12.500 0 4-3 7-7.500 7-3.500 0-5-1.500-4-3.500 1-3-2-7-7-7-5 0-9 2-11.200 4z" fill="url(#gEdge)"/><path d="M14 11c-6 3-5 14 4 16 4 .8 8-1 10-4-6 3-14 0-14-6 0-1.500.5-2.500 1.500-3.500z" fill="#123f86"/><path d="M18 14c2 1 1 3 .5 4 0 1 1.500 1.500 4 1.500-2 2-8 1-8-2.500 0-1.500 1.500-3.500 3.500-3z" fill="#1d1f24"/></svg></button>
  <button class="app open" aria-label="VirtualBox"><svg class="i30"><use href="#penguin"/></svg></button>
  <div class="charge"><span>61%</span></div>
  <button class="news"><svg viewBox="0 0 26 20"><rect x="6" y="2" width="20" height="17" rx="2" fill="#0c4f94"/><rect width="23" height="20" rx="2" fill="#1a86e0"/><path d="M3 5h17" stroke="#fff" stroke-width="2.500"/><rect x="3" y="9" width="7" height="7" fill="#e5f1fc"/><path d="M13 10.500h7M13 15h7" stroke="#fff" stroke-width="2.500"/></svg>Breaking news</button>
  <div class="systray">
    <svg viewBox="0 0 20 20"><path d="M2 14l8-8 8 8"/></svg>
    <svg viewBox="0 0 20 20"><rect x="3" y="0" width="14" height="20" rx="7" fill="#0a84f5" stroke="none"/><path d="M6 6.500l7.500 7L10 17V3l3.500 3.500-7.500 7"/></svg>
    <svg viewBox="0 0 20 20"><path d="M9 0l9 3v6c0 5-4 8-9 10-5-2-9-5-9-10V3z" fill="#fff" stroke="none"/><path d="M9 0v19M0 9h18" stroke="#1c1f27"/><circle cx="14.500" cy="14.500" r="5.500" fill="#119a48" stroke="none"/><path d="M12 14.500l2 2 3-3.500"/></svg>
    <svg viewBox="0 0 20 20"><path d="M1.500 5.500h16v10h-16zM18 8.500h2v4h-2"/><path d="M3 7h8v7H3z" fill="#fff" stroke="none"/></svg>
    <svg viewBox="0 0 20 20"><rect x="3.500" y="5.500" width="10" height="9" rx="2"/><path d="M13.500 9l4-2v6.500l-4-2M4 3c3-2.500 7-2.500 10 0M4 17c3 2.500 7 2.500 10 0"/></svg>
    <svg viewBox="0 0 20 20"><path d="M3 16c-4-1-3-6 1-6 1-5 8-5 9-1 5-1 6 6 3 7z" fill="#fff" stroke="none"/><path d="M4 10c1-5 8-6 9-1L3 16c-4-1-3-6 1-6z" fill="#cfcfcf" stroke="none"/></svg>
    <svg viewBox="0 0 20 20"><path d="M3 17C3 9 9 4 18 4M7 17c0-5 4-9 11-9M11 17c0-3 2-5 7-5"/><circle cx="16" cy="16" r="1.500" fill="#fff" stroke="none"/></svg>
    <svg viewBox="0 0 20 20"><path d="M.5 7.500h3l4-4v13l-4-4h-3zM10.500 7c2 2 2 4 0 6M13.500 5c3 3 3 7 0 10M16.500 3c4 4 4 10 0 14"/></svg>
    <svg viewBox="0 0 20 20" class="pen"><path d="M6 18l1-5L15 2l3 2-8 11zM9 9C4 8 0 11 1 14s5 2 7 0 3-6 5-5 1 3 6 1"/></svg>
    <svg viewBox="0 0 30 18" class="kbd"><path d="M.5.500h29v16H.5z"/><path d="M4 5h22M4 8.500h22" stroke-dasharray="2 2"/><path d="M4 12.500h3M9 12.500h12M23 12.500h3"/></svg>
    <span class="lang">ENG</span>
    <time class="clock"><span>13:55</span><span>26-03-2023</span></time>
    <button class="notes" aria-label="1 notification"><svg viewBox="0 0 32 32"><path d="M1 1h20v16H11l-4 4v-4H1z" fill="#fff" stroke="none"/><path d="M5 5.500h12M5 9h12M5 12.500h12" stroke="#1c1f27" stroke-width="1.300"/><circle cx="20.500" cy="20.500" r="10" fill="#333539" stroke="#8d8f93"/></svg><b>1</b></button>
    <i class="peek"></i>
  </div>
</div>
<script src="waveform.js"></script>
</body>
</html>
```
FILE: styles.css
```css
* { box-sizing: border-box; }
body { margin: 0; min-height: 100vh; display: flex; flex-direction: column; background: #eeebe7; color: #111; font: 13px/16px "DejaVu Sans", sans-serif; }
button { margin: 0; padding: 0; border: 0; background: none; color: inherit; font: inherit; display: inline-flex; align-items: center; justify-content: center; }
svg { display: block; flex: none; width: 16px; height: 16px; }
.sprite { position: absolute; width: 0; height: 0; }
.i16 { width: 16px; height: 16px; }
.i20 { width: 20px; height: 20px; }
.i28 { width: 28px; height: 28px; }
.i30 { width: 30px; height: 30px; }
.plain { height: 100%; }

/* Host window frame */
.host-title { display: flex; align-items: center; height: 29px; padding: 0 3px 2px 2px; background: #fff; color: #999; font: 14px/20px "Open Sans", sans-serif; }
.host-name { flex: 1; margin-left: 5px; }
.host-btn { width: 58px; height: 26px; }
.host-btn svg { width: 14px; height: 14px; fill: none; stroke: #999; }

/* Guest desktop top panel */
.gnome-top { display: flex; align-items: center; gap: 17px; height: 33px; padding: 0 4px 0 7px; background: #ebebe9; border-bottom: 1px solid #9aa295; }
.gnome-top .i30:first-child { margin-right: -10px; }
.tray-grip { width: 5px; height: 18px; background: radial-gradient(circle, #aaa 1px, transparent 1px) 0 0 / 3px 3px; }
.gnome-top .tray-grip { margin-left: auto; margin-right: -9px; }
.tray-net { margin: 0 -9px; }
.gnome-clock { margin-left: 264px; font-size: 14px; }

.win-title { display: flex; align-items: center; height: 26px; padding: 1px 7px 0; background: linear-gradient(#4a4a4a, #303030 4px, #2c2c2c 60%, #171717); border-bottom: 2px solid #33517d; }
.win-title h1 { flex: 1; margin: 0; text-align: center; color: #fff; font: bold 13px/16px "DejaVu Sans", sans-serif; }
.win-title button { width: 24px; height: 20px; }
.win-title button svg { width: 10px; height: 10px; fill: none; stroke: #ddd; }
.win-title button:last-child { width: 12px; margin-left: 6px; }

.menubar { display: flex; align-items: center; gap: 12px; height: 26px; padding-top: 1px; background: linear-gradient(#eeebe7, #e3e0db); border-bottom: 1px solid #c6c2bd; }
.menubar .i16 { margin-right: -6px; }
.menubar u { text-underline-offset: 2px; }
.mdi { display: flex; gap: 2px; margin-left: auto; padding: 0 1px 4px 0; }
.mdi button { width: 18px; height: 18px; border: 1px solid #8a8580; border-radius: 3px; background: linear-gradient(#fdfcfa, #e6e1dc); }
.mdi svg { fill: none; stroke: #666; }

/* Toolbar */
.toolbar { display: flex; height: 35px; background: #eeebe7; border-top: 1px solid #fff; border-bottom: 2px solid #b9b4ae; }
.group { display: flex; align-items: center; padding-left: 8px; border-right: 1px solid #c0bcb7; box-shadow: 1px 0 #fff; background: repeating-linear-gradient(#b5b1ac 0 1px, #faf9f7 1px 3px) 4px 50% / 4px 18px no-repeat; }
.group.last { flex: 1; border-right: 0; box-shadow: none; }
.group button { width: 29px; height: 29px; }
.sep { width: 8px; height: 20px; background: linear-gradient(90deg, #cbc7c2 1px, #fff 1px 2px, transparent 2px) 4px 0 no-repeat; }
.combo { display: flex; position: relative; width: 75px; height: 24px; margin-left: 2px; }
.combo select { appearance: none; width: 100%; padding: 0 0 0 4px; border: 1px solid #7f7973; border-radius: 3px; color: #111; font: inherit; background: linear-gradient(90deg, #fff 53px, #8f8a85 53px 54px, #f1eeea 54px); }
.combo svg { position: absolute; right: 6px; top: 9px; width: 10px; height: 8px; }
.group .relaunch { width: 102px; margin-left: 2px; border: 1px solid #7f7973; border-radius: 3px; background: linear-gradient(#fbf9f7, #e9e4df); gap: 1px; }

/* Work area */
.workspace { flex: 1; display: flex; }
.sidebar { display: flex; flex-direction: column; width: 30px; padding-left: 1px; border-right: 2px solid #b9b4ae; }
.sidebar button { width: 26px; height: 26px; margin: 2px 0; }
.hsep { width: 16px; height: 2px; margin: 3px 5px 2px; background: #fff; border-top: 1px solid #cbc7c2; }
.sidebar .pressed { border: 1px solid #8a8580; border-radius: 3px; background: #cfcbc5; }
.sidebar .dim { border-color: #b5b0aa; }
.pane { display: flex; flex-direction: column; background: #fff; border-right: 1px solid #b5afa9; }
.names { width: 191px; }
.values { width: 128px; margin-left: 2px; border-left: 1px solid #b5afa9; }
.pane-top { height: 34px; border-bottom: 2px solid #b5afa9; }
.pane-body { flex: 1; padding: 1px 1px 0; }
.pane-foot { height: 40px; border-top: 2px solid #b5afa9; }
table { width: 100%; border-collapse: collapse; table-layout: fixed; }
th { height: 26px; padding: 0 9px; text-align: left; background: linear-gradient(90deg, transparent calc(100% - 3px), #c9c4be 0 calc(100% - 2px), transparent 0) #eeebe7; border-bottom: 1px solid #a89c94; }
td { height: 20px; padding: 0; line-height: 20px; font-size: 11px; color: #fff; }
.names tbody { background: #8f8b7c; }
.sig { display: flex; align-items: center; height: 20px; }
.sig i { width: 22px; padding-left: 5px; }
.sig i svg { width: 8px; height: 10px; }
.sig > svg { width: 17px; height: 17px; margin: 0 6px 0 1px; }
.values tbody { background: #000; }
.values td { padding-left: 4px; font-family: "Liberation Mono", monospace; font-size: 12px; line-height: 18px; }
.waves { flex: 1; min-width: 0; margin-left: 2px; padding-left: 1px; border-left: 2px solid #b5afa9; }
.wave-view { flex: 1; min-height: 300px; overflow: hidden; position: relative; }
.wave-view svg { position: absolute; inset: 0; width: 100%; height: 100%; font-size: 11px; }
.cursor-info { margin: 0; height: 38px; padding: 17px 0 0 7px; font-size: 11px; }

/* Scroll bars */
.hscroll { display: flex; height: 15px; border: 1px solid #857f79; border-radius: 3px; background: #d6ccc2; }
.waves .hscroll { height: 16px; margin-bottom: 1px; }
.hscroll button, .vscroll button { width: 14px; background: linear-gradient(#fff, #ece8e4); }
.hscroll button::before, .vscroll button::before { content: ""; border: 4px solid transparent; }
.hscroll .left::before { border-right: 5px solid #000; border-left: 0; }
.hscroll .right::before { border-left: 5px solid #000; border-right: 0; }
.thumb { width: 27px; border: solid #857f79; border-width: 0 1px; background: repeating-linear-gradient(90deg, #b5b0aa 0 1px, transparent 1px 3px) center / 8px 7px no-repeat, linear-gradient(#fdfcfb, #e6e1dc); }
.thumb.full, .trough { flex: 1; }
.trough + .right { border-left: 1px solid #857f79; }
.vscroll { display: flex; flex-direction: column; width: 16px; margin-left: 1px; border: 1px solid #857f79; border-radius: 3px; }
.vscroll button { height: 14px; }
.vscroll .thumb { flex: 1; width: auto; border-width: 1px 0; background: repeating-linear-gradient(#b5b0aa 0 1px, transparent 1px 3px) center / 7px 8px no-repeat, linear-gradient(90deg, #fdfcfb, #e6e1dc); }
.vscroll .top::before { border-bottom: 5px solid #000; border-top: 0; }
.vscroll .bottom::before { border-top: 5px solid #000; border-bottom: 0; }

/* Document tabs and status */
.doc-tabs { height: 29px; border-top: 1px solid #b5afa9; }
.doc-tab { display: flex; align-items: center; width: 50%; height: 28px; padding: 2px 9px 0 6px; background: linear-gradient(#e8e3de, #f6f3ef); border: solid #9b9690; border-width: 0 1px; border-bottom: 3px solid #4f80b0; }
.doc-tab span { flex: 1; text-align: center; }
.doc-tab button svg { width: 14px; height: 14px; }
.status { display: flex; justify-content: flex-end; height: 33px; padding: 2px 1px 3px; border-bottom: 1px solid #fff; }
.status span { padding: 6px 4px; border: 1px solid #9b9690; border-right-color: #fff; border-bottom-color: #fff; }

.gnome-bottom { display: flex; align-items: center; gap: 2px; height: 25px; padding: 0 0 0 4px; background: #ebebe9; }
.gnome-bottom .tray-grip { margin-right: 1px; }
.task { width: 206px; height: 22px; padding: 0 6px; gap: 8px; justify-content: flex-start; border: 1px solid #85827f; border-radius: 3px; background: linear-gradient(#fff, #e9e8e6); }
.task.active { background: linear-gradient(#cbc9c6, #b9b7b4); }
.trash { width: 20px; height: 20px; margin: 0 auto 0 600px; }
.pager { width: 41px; height: 21px; border: 1px solid #85827f; background: #cfe0f8; box-shadow: inset 0 0 0 1px #fff; }

.vbox-status { display: flex; align-items: center; justify-content: flex-end; gap: 3px; height: 25px; padding-right: 1px; background: #f0f0f0; font: 12px/18px "Noto Sans", sans-serif; }
.vbox-status svg { width: 20px; height: 20px; }

/* Host taskbar */
.taskbar { display: flex; align-items: stretch; height: 50px; color: #fff; background: linear-gradient(90deg, #1c1d25, #1b2028 25%, #1e1d22 36%, #172045 40%, #172145 43%, #1c1f2c 46%, #1d1f36 54%, #1c2c44 59%, #1a1e42 64%, #1b2551 73%, #1c2027 78%, #1b1e24); font: 17px/24px "Open Sans", sans-serif; }
.start { width: 60px; }
.start svg { width: 20px; height: 20px; }
.search { display: flex; align-items: center; width: 360px; padding: 0 14px; background: #f1f1f1; border: 1px solid #bbb; }
.glass { width: 22px; height: 22px; margin-bottom: 1px; }
.search input { flex: 1; min-width: 0; height: 40px; margin-left: 13px; padding: 0; border: 0; background: none; font: 18px/24px "Open Sans", sans-serif; }
.search input::placeholder { color: #333; opacity: 1; }
.doodle { width: 70px; height: 44px; align-self: flex-end; }
.app { width: 51px; margin: 0 6px; }
.search + .app { margin-left: 8px; }
.search + .app svg { width: 24px; height: 24px; }
.app .i28 { width: 28px; height: 28px; }
.app .i30 { width: 30px; height: 30px; }
.open { border-bottom: 3px solid #b5c8f8; }
.charge { position: relative; align-self: center; width: 61px; height: 25px; margin-left: 374px; border: 3px solid #fff; background: linear-gradient(90deg, #169b4a 61%, #000 0); text-align: center; line-height: 19px; }
.charge::after { content: ""; position: absolute; right: -5px; top: 4px; width: 2px; height: 11px; background: #fff; }
.news { margin-left: auto; gap: 12px; }
.news svg { width: 26px; height: 20px; }
.systray { display: flex; align-items: center; gap: 10px; margin-left: 28px; }
.systray svg { width: 20px; height: 20px; fill: none; stroke: #fff; stroke-width: 1.3; }
.systray .pen { margin: 0 5px 0 4px; }
.systray .kbd { width: 30px; height: 18px; }
.lang { font-size: 15px; margin-left: 3px; }
.clock { display: flex; flex-direction: column; align-items: center; margin-left: 6px; font-size: 14px; line-height: 23px; }
.notes { position: relative; width: 32px; height: 32px; margin-left: 14px; }
.systray .notes svg { width: 32px; height: 32px; }
.notes b { position: absolute; left: 16px; top: 10px; font-size: 14px; }
.peek { align-self: stretch; width: 6px; border-left: 1px solid #6a6c72; margin-left: 4px; }
```
FILE: waveform.js
```js
(function () {
  var PX = 100, ORIGIN = 2, AXIS = 57, FIRST = 60, STEP = 20;
  var NS = "http://www.w3.org/2000/svg";
  var svg = document.getElementById("waveform");
  var bits = [
    [[1, 2], [3, 4], [5, 6], [7, 8], [9, 10], [11, 12], [13, 14]],
    [[0, 2], [4, 6], [10, 12], [14, 99]]
  ];
  var buses = [
    [[0, "0000000000"], [4, "0000000100"], [10, "0000000000"], [14, "0000000100"]],
    [[0, "10101010"], [4, "01010101"], [10, "10101010"], [14, "01010101"]],
    [[0, "UUUUUUUU"], [1, "00000000"], [3, "10101010"], [5, "00000000"], [7, "01010101"], [11, "10101010"]],
    [[0, "2 ps"]]
  ];

  function add(tag, attrs, text) {
    var el = document.createElementNS(NS, tag);
    for (var k in attrs) el.setAttribute(k, attrs[k]);
    if (text) el.textContent = text;
    svg.appendChild(el);
  }

  function draw() {
    svg.textContent = "";
    var end = svg.clientWidth - 2, bottom = svg.clientHeight;
    function x(t) { return Math.min(ORIGIN + t * PX, end); }
    function line(d, color, width) { add("path", { d: d, fill: "none", stroke: color || "#000", "stroke-width": width || 1 }); }

    bits.forEach(function (highs, row) {
      var top = FIRST + 1 + row * STEP, low = top + 14, d = "M" + ORIGIN + " " + (highs[0][0] ? low : top);
      highs.forEach(function (h) {
        var a = x(h[0]), b = x(h[1]);
        if (a >= end) return;
        add("rect", { x: a, y: top, width: b - a, height: 15, fill: "#bfbfbf" });
        d += "H" + a + "V" + top + "H" + b + (b < end ? "V" + low : "");
      });
      line(d + "H" + end, "#000", 2);
    });

    var d = "M" + ORIGIN + " " + (AXIS + 0.5) + "H" + end;
    for (var i = 0; ORIGIN + i * 10 <= end; i++) {
      var gx = ORIGIN + i * 10 + 0.5;
      if (i % 10) d += "M" + gx + " " + AXIS + "V" + (i % 5 ? 52 : 49);
      else {
        if (i) line("M" + gx + " 41V" + bottom);
        add("text", { x: gx + 1, y: 48 }, i / 10 + " ps");
      }
    }
    line(d);

    buses.forEach(function (segs, n) {
      var top = FIRST + 1 + (n + 2) * STEP, low = top + 14, mid = top + 7;
      segs.forEach(function (s, k) {
        var a = x(s[0]), b = segs[k + 1] ? x(segs[k + 1][0]) : end;
        if (a >= end) return;
        var right = b < end ? b - 4 : b;
        var p = "M" + right + " " + top + "H" + (a + 4) + "L" + (a + 1) + " " + (top + 5) + "V" + (low - 5) + "L" + (a + 4) + " " + low + "H" + right;
        if (b < end) p += "L" + (b - 1) + " " + (low - 5) + "V" + (top + 5) + "Z";
        line(p, s[1][0] === "U" ? "#ffa500" : "#000", 2);
        add("text", { x: (a + b) / 2, y: mid + 4, "text-anchor": "middle" }, s[1]);
      });
    });

    line("M2 1V" + bottom, "#000", 2);
    line("M1 " + (bottom - 0.5) + "H" + end);
    add("rect", { x: 1, y: 1, width: 29, height: 16 });
    add("text", { x: 3, y: 12, fill: "#fff" }, "0 ps");
  }

  draw();
  window.addEventListener("resize", draw);
})();
```
